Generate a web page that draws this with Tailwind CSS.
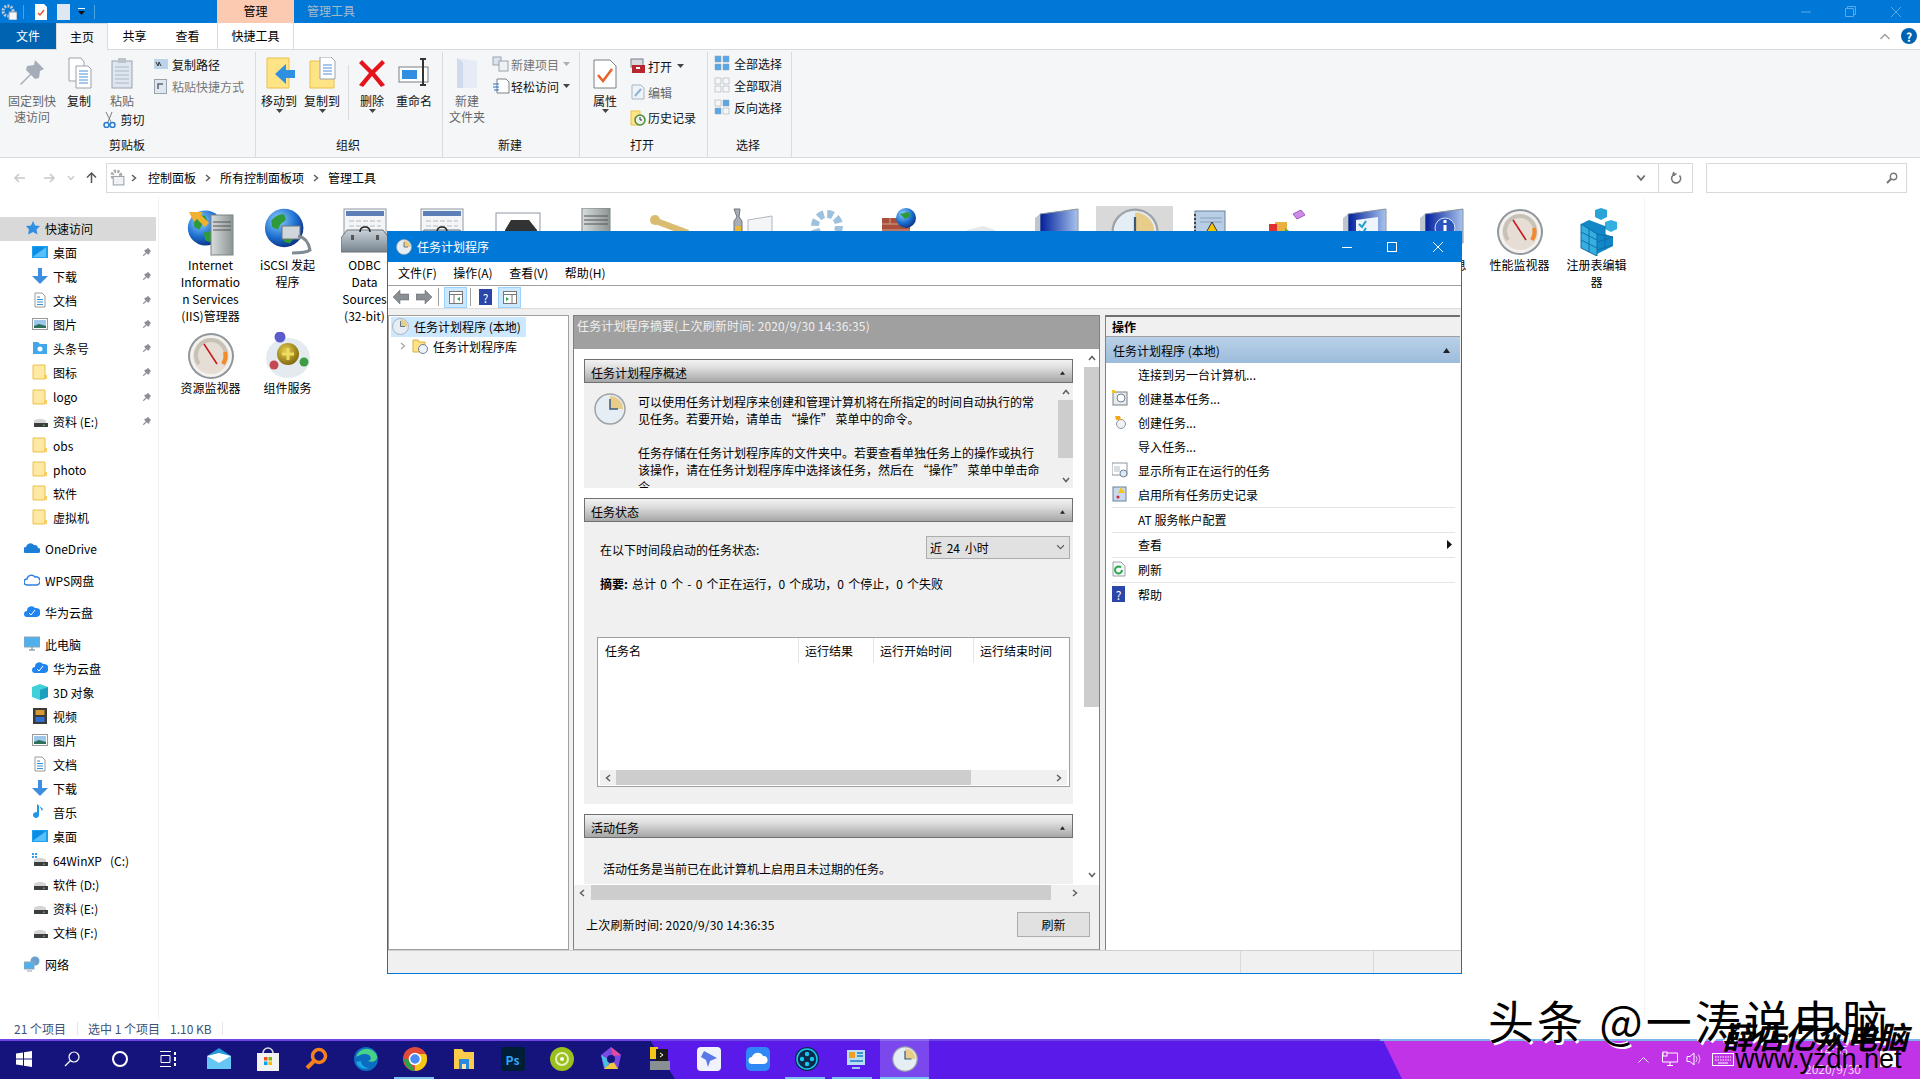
<!DOCTYPE html>
<html lang="zh-CN">
<head>
    <meta charset="UTF-8">
    <title>任务计划程序</title>
    <script src="https://cdn.jsdelivr.net/npm/@tailwindcss/browser@4"></script>
</head>
<body class="relative w-[1920px] h-[1080px] overflow-hidden flex flex-col bg-white text-black text-[12px] leading-[17px] font-['Noto_Sans_CJK_SC','Noto_Sans',sans-serif]">

    <!-- shared icons -->
    <svg class="absolute w-0 h-0">
        <defs>
            <radialGradient id="gGlobe" cx="35%" cy="30%" r="75%"><stop offset="0" stop-color="#8fd0ff"/><stop offset=".6" stop-color="#1d6fd0"/><stop offset="1" stop-color="#0b2f80"/></radialGradient>
            <linearGradient id="gServer" x1="0" x2="1"><stop offset="0" stop-color="#d8dcdc"/><stop offset="1" stop-color="#8c9494"/></linearGradient>
            <linearGradient id="gBox" x1="0" y1="0" x2="0" y2="1"><stop offset="0" stop-color="#cbd3da"/><stop offset="1" stop-color="#76838d"/></linearGradient>
            <radialGradient id="gGold" cx="40%" cy="35%" r="70%"><stop offset="0" stop-color="#e8cf50"/><stop offset="1" stop-color="#7c6408"/></radialGradient>
            <linearGradient id="gMon" x1="0" x2="1"><stop offset="0" stop-color="#001e9c"/><stop offset="1" stop-color="#a9c4ec"/></linearGradient>
        </defs>
        <symbol id="folder" viewBox="0 0 16 16"><path d="M1 1h12v14H1z" fill="#ffe9a3" stroke="#ecc04a"/><path d="M12 11h3v4h-3z" fill="#f5cf62"/></symbol>
        <symbol id="pin" viewBox="0 0 12 12"><path d="M7 1l4 4-1.500 1-1 3-1.500 0-1.500-1.500L2 11 1 10l3.500-3.500L3 5l0-1.500 3-1z" fill="#8b8f94"/></symbol>
        <symbol id="drive" viewBox="0 0 16 16"><path d="M2 7.500Q8 4 14 7.500V11H2z" fill="#d5d5d5"/><path d="M2 10h14v4H2z" fill="#3d3d3d"/><rect x="11" y="11.500" width="1.500" height="1.500" fill="#49c24a"/></symbol>
        <symbol id="desktop" viewBox="0 0 16 16"><rect width="16" height="12" y="2" fill="#1ba1f0"/><path d="M1 13L14 3v10z" fill="#58c0f8"/><path d="M1 3h13L1 12z" fill="#0c8ce4"/></symbol>
        <symbol id="down" viewBox="0 0 16 16"><path d="M6 0h4v8h6l-8 8-8-8h6z" fill="#3c8fdf"/></symbol>
        <symbol id="doc" viewBox="0 0 16 16"><path d="M3 1h7l3 3v11H3z" fill="#fff" stroke="#9a9a9a"/><path d="M5 5h3M5 7.500h6M5 10h6M5 12.500h6" stroke="#2f90e0"/></symbol>
        <symbol id="pic" viewBox="0 0 16 16"><rect y="2.500" x=".5" width="15" height="11" fill="#fff" stroke="#9a9a9a"/><rect x="2" y="4" width="12" height="8" fill="#9dc8ec"/><path d="M2 10l5-2 7 2v2H2z" fill="#2f6e58"/></symbol>
        <symbol id="clock" viewBox="0 0 32 32"><circle cx="16" cy="16" r="15" fill="#e6eef5" stroke="#9ea3a8" stroke-width="1.500"/><path d="M16 3A13 13 0 0 1 29 16H16z" fill="#e8cc8a"/><path d="M16 6v10h8" fill="none" stroke="#3a5c7c" stroke-width="1.500"/></symbol>
        <symbol id="globe" viewBox="0 0 48 48"><circle cx="22" cy="24" r="21" fill="url(#gGlobe)"/><path d="M8 16q6-8 14-7l2 6-6 5-3 6-6-3zM20 30l10-3 6 4-8 10-6-2z" fill="#2f9a3a"/></symbol>
        <symbol id="odbc" viewBox="0 0 48 48"><rect x="3" y="1" width="42" height="34" fill="#f3f5f7" stroke="#8b97a3"/><rect x="5" y="3" width="38" height="5" fill="#5c7fb8"/><path d="M8 13h32M8 18h32M8 23h32" stroke="#b3bcc4" stroke-dasharray="5 2"/><path d="M0 30l6-8h36l6 8v14H0z" fill="url(#gBox)" stroke="#6a757e"/><path d="M19 24q0-5 5-5t5 5" fill="none" stroke="#222" stroke-width="1.500"/><rect x="10" y="27" width="3" height="5" fill="#555"/><rect x="35" y="27" width="3" height="5" fill="#555"/></symbol>
        <symbol id="gauge" viewBox="0 0 48 48"><circle cx="24" cy="24" r="23" fill="#90979c"/><circle cx="24" cy="24" r="21" fill="#f4f2ee"/><circle cx="24" cy="24" r="18" fill="#e6ded4"/><path d="M12 32a15 15 0 1 1 24 0" fill="none" stroke="#c8c1b8" stroke-width="4"/><path d="M38 20a15 15 0 0 1-2 12" fill="none" stroke="#f08a2c" stroke-width="4"/><path d="M17 12l13 20" stroke="#c8141c" stroke-width="1.500"/></symbol>
        <symbol id="monitor" viewBox="0 0 48 48"><path d="M6 6l38-5v34l-38 5z" fill="url(#gMon)" stroke="#8a949e"/><path d="M1 10l5-4v34l-5-3z" fill="#bfc6cc"/></symbol>
        <symbol id="dropdown" viewBox="0 0 7 4"><path d="M0 0h7L3.500 4z" fill="#444"/></symbol>
        <symbol id="quad" viewBox="0 0 16 16"><path d="M1 1h6v6H1zM9 1h6v6H9zM1 9h6v6H1zM9 9h6v6H9z" fill="currentColor" stroke="#9aa3aa" stroke-width=".5"/></symbol>
        <symbol id="chev-l" viewBox="0 0 8 8"><path d="M6 1L2.500 4 6 7" fill="none" stroke="#606060" stroke-width="1.500"/></symbol>
        <symbol id="chev-r" viewBox="0 0 8 8"><path d="M2 1l3.500 3L2 7" fill="none" stroke="#606060" stroke-width="1.500"/></symbol>
        <symbol id="chev-u" viewBox="0 0 8 8"><path d="M1 6l3-3.500L7 6" fill="none" stroke="#606060" stroke-width="1.500"/></symbol>
        <symbol id="chev-d" viewBox="0 0 8 8"><path d="M1 2l3 3.500L7 2" fill="none" stroke="#606060" stroke-width="1.500"/></symbol>
        <symbol id="tri" viewBox="0 0 7 5"><path d="M3.500 0L7 5H0z" fill="#222"/></symbol>
    </svg>

    <!-- Explorer title bar -->
    <header class="h-[23px] bg-[#0078d7] flex shrink-0">
        <div class="w-[217px] flex items-center pl-[1px]">
            <svg class="w-[16px] h-[16px]" viewBox="0 0 16 16"><circle cx="7" cy="7" r="5" fill="none" stroke="#c0c8d0" stroke-width="3" stroke-dasharray="2 1.200"/><rect x="8" y="8" width="8" height="8" fill="#f4f6f8" stroke="#8aa0b8"/></svg>
            <span class="w-[1px] h-[14px] bg-[#4ca3e6] ml-[6px]"></span>
            <svg class="w-[12px] h-[16px] ml-[11px]" viewBox="0 0 12 16"><path d="M0 0h9l3 3v13H0z" fill="#fff"/><path d="M3 9l2 2 4-5" fill="none" stroke="#e0562a" stroke-width="1.500"/></svg>
            <span class="w-[13px] h-[16px] bg-[#dfe7f2] ml-[10px]"></span>
            <svg class="w-[7px] h-[8px] ml-[8px]" viewBox="0 0 7 8"><path d="M0 0h7v1H0z" fill="#fff"/><path d="M0 3h7L3.500 7z" fill="#111"/></svg>
            <span class="w-[1px] h-[14px] bg-[#4ca3e6] ml-[9px]"></span>
        </div>
        <div class="w-[77px] h-full bg-[#fccab1] flex items-center justify-center pb-[3px]">管理</div>
        <div class="ml-[13px] flex items-center text-[#a4b8cc] pb-[3px]">管理工具</div>
        <div class="ml-auto flex items-center gap-[31px] pr-[17px]">
            <svg class="w-[14px] h-[14px]" viewBox="0 0 14 14"><path d="M2 7h10" stroke="#5ca9e6"/></svg>
            <svg class="w-[14px] h-[14px]" viewBox="0 0 14 14"><path d="M3.500 3.500V1.500h8v8h-2M1.500 3.500h8v8h-8z" fill="none" stroke="#5ca9e6"/></svg>
            <svg class="w-[14px] h-[14px]" viewBox="0 0 14 14"><path d="M2 2l10 10M12 2L2 12" stroke="#5ca9e6"/></svg>
        </div>
    </header>

    <!-- Ribbon tabs -->
    <nav class="h-[26px] flex items-center shrink-0">
        <div class="w-[56px] h-[26px] bg-[#0063b1] text-white flex items-center justify-center pb-[2px]">文件</div>
        <div class="w-[52px] h-[27px] border-x border-t border-[#dadbdc] bg-[#f5f6f7] self-start flex items-center justify-center pb-[2px] relative z-10">主页</div>
        <div class="w-[53px] h-[26px] flex items-center justify-center pb-[2px]">共享</div>
        <div class="w-[53px] h-[26px] flex items-center justify-center pb-[2px]">查看</div>
        <div class="ml-[3px] w-[77px] h-[26px] border-x border-[#dadbdc] flex items-center justify-center pb-[2px]">快捷工具</div>
        <svg class="w-[12px] h-[12px] ml-auto" viewBox="0 0 8 8"><path d="M1 6l3-3 3 3" fill="none" stroke="#a0a0a0"/></svg>
        <span class="w-[16px] h-[16px] rounded-full bg-[#0063b1] text-white font-bold flex items-center justify-center ml-[10px] mr-[3px]">?</span>
    </nav>

    <!-- Ribbon -->
    <section class="h-[109px] bg-[#f5f6f7] border-y border-[#dadbdc] flex shrink-0 text-[#111]">
        <!-- clipboard -->
        <div class="w-[256px] h-[105px] mt-[2px] border-r border-[#dadbdc] flex flex-col">
            <div class="h-[83px] pt-[1px] flex">
                <div class="ml-[6px] w-[52px] mt-[4px] flex flex-col items-center text-center text-[#666]">
                    <svg class="w-[32px] h-[32px]" viewBox="0 0 32 32"><path d="M19 3l9 9-4 2-1 7-4 1-4-4-10 10-1-1 10-10-4-4 1-4 7-1z" fill="#a4adb8"/></svg>
                    <span class="mt-[4px] leading-[16px]">固定到快<br>速访问</span>
                </div>
                <div class="ml-[6px] w-[30px] mt-[4px] flex flex-col items-center">
                    <svg class="w-[32px] h-[32px]" viewBox="0 0 32 32"><path d="M6 1h12l3 4v19H6z" fill="#fff" stroke="#9aa3aa"/><path d="M13 9h12l3 3v19H13z" fill="#fff" stroke="#9aa3aa"/><path d="M16 14h9M16 17h9M16 20h9M16 23h9M16 26h9" stroke="#4a90d9"/></svg>
                    <span class="mt-[4px] leading-[16px]">复制</span>
                </div>
                <div class="ml-[6px] w-[44px] mt-[4px] flex flex-col items-center">
                    <svg class="w-[32px] h-[32px]" viewBox="0 0 32 32"><rect x="6" y="4" width="20" height="27" fill="#dfe6f0" stroke="#9aa3aa"/><rect x="12" y="1" width="8" height="5" fill="#bcc3ca"/><path d="M9 10h14M9 14h14M9 18h14M9 22h14M9 26h14" stroke="#a9b9cc"/></svg>
                    <span class="mt-[4px] leading-[16px] text-[#666]">粘贴</span>
                    <div class="flex items-center whitespace-nowrap mt-[2px] ml-[3px]">
                        <svg class="w-[14px] h-[16px] mr-[4px]" viewBox="0 0 14 16"><path d="M3 0l5 10M9 0L5 10" stroke="#7a7f86"/><circle cx="3.500" cy="13" r="2.500" fill="none" stroke="#2b7bd0" stroke-width="1.500"/><circle cx="9.500" cy="13" r="2.500" fill="none" stroke="#2b7bd0" stroke-width="1.500"/></svg>
                        <span>剪切</span>
                    </div>
                </div>
                <div class="ml-[10px] flex flex-col">
                    <div class="h-[22px] flex items-center">
                        <svg class="w-[14px] h-[10px] mr-[4px]" viewBox="0 0 14 10"><rect width="14" height="10" fill="#bcd4ea"/><path d="M2 3l2 4 1-4 2 4" fill="none" stroke="#333"/></svg>
                        <span>复制路径</span>
                    </div>
                    <div class="h-[22px] flex items-center text-[#777]">
                        <svg class="w-[13px] h-[16px] mr-[5px]" viewBox="0 0 13 16"><rect x=".5" y="1.500" width="12" height="14" fill="#dfe6f0" stroke="#9aa3aa"/><path d="M4 11V6h5" fill="none" stroke="#5c6670" stroke-width="1.500"/></svg>
                        <span>粘贴快捷方式</span>
                    </div>
                </div>
            </div>
            <div class="h-[20px] pl-[109px] pb-[1px] flex items-center">剪贴板</div>
        </div>
        <!-- organize -->
        <div class="w-[187px] h-[105px] mt-[2px] border-r border-[#dadbdc] flex flex-col">
            <div class="h-[83px] pt-[1px] flex">
                <div class="ml-[5px] w-[36px] mt-[4px] flex flex-col items-center">
                    <svg class="w-[32px] h-[32px]" viewBox="0 0 32 32"><path d="M4 1h22v30H4z" fill="#ffe486" stroke="#ecc04a"/><path d="M32 13v8h-9v6l-11-10 11-10v6z" fill="#2f8fe0"/></svg>
                    <span class="mt-[4px] leading-[16px]">移动到</span>
                    <svg class="w-[7px] h-[4px]"><use href="#dropdown"/></svg>
                </div>
                <div class="ml-[7px] w-[36px] mt-[4px] flex flex-col items-center">
                    <svg class="w-[32px] h-[32px]" viewBox="0 0 32 32"><path d="M4 4h24v27H4z" fill="#ffe486" stroke="#ecc04a"/><path d="M14 0h11l4 4v18H14z" fill="#fff" stroke="#9aa3aa"/><path d="M17 8h9M17 11h9M17 14h9M17 17h9" stroke="#4a90d9"/></svg>
                    <span class="mt-[4px] leading-[16px]">复制到</span>
                    <svg class="w-[7px] h-[4px]"><use href="#dropdown"/></svg>
                </div>
                <span class="ml-[8px] w-[1px] h-[55px] mt-[12px] bg-[#dadbdc]"></span>
                <div class="ml-[10px] w-[26px] mt-[4px] flex flex-col items-center">
                    <svg class="w-[32px] h-[32px]" viewBox="0 0 32 32"><path d="M6 3l10 10L26 3l3 3-10 10 10 12-4 2-9-11-9 11-4-2 10-12L3 6z" fill="#e5141c"/></svg>
                    <span class="mt-[4px] leading-[16px]">删除</span>
                    <svg class="w-[7px] h-[4px]"><use href="#dropdown"/></svg>
                </div>
                <div class="ml-[10px] w-[38px] mt-[4px] flex flex-col items-center">
                    <svg class="w-[32px] h-[32px]" viewBox="0 0 32 32"><rect x="1" y="10" width="29" height="15" fill="#fff" stroke="#7a7f86"/><rect x="4" y="13" width="15" height="9" fill="#2f8fe0"/><path d="M22 2h6M25 2v26M22 28h6" fill="none" stroke="#333" stroke-width="2"/></svg>
                    <span class="mt-[4px] leading-[16px]">重命名</span>
                </div>
            </div>
            <div class="h-[20px] pl-[80px] pb-[1px] flex items-center">组织</div>
        </div>
        <!-- new -->
        <div class="w-[137px] h-[105px] mt-[2px] border-r border-[#dadbdc] flex flex-col">
            <div class="h-[83px] pt-[1px] flex">
                <div class="ml-[5px] w-[38px] mt-[4px] flex flex-col items-center text-[#666]">
                    <svg class="w-[32px] h-[32px]" viewBox="0 0 32 32"><path d="M6 1l20 3v27H6z" fill="#e6ecf5"/><path d="M6 1l6 4v26H6z" fill="#cfdbec"/></svg>
                    <span class="mt-[4px] leading-[16px] text-center">新建<br>文件夹</span>
                </div>
                <div class="ml-[6px] flex flex-col">
                    <div class="h-[22px] flex items-center text-[#777]">
                        <svg class="w-[18px] h-[16px] mr-[1px]" viewBox="0 0 18 16"><rect x="1" y="1" width="8" height="8" fill="#dbe4ee" stroke="#9aa3aa"/><rect x="7" y="5" width="9" height="10" fill="#eef2f6" stroke="#9aa3aa"/></svg>
                        <span>新建项目</span>
                        <svg class="w-[7px] h-[4px] ml-[4px] opacity-40"><use href="#dropdown"/></svg>
                    </div>
                    <div class="h-[22px] flex items-center">
                        <svg class="w-[18px] h-[16px] mr-[1px]" viewBox="0 0 18 16"><path d="M5 1h9l3 3v11H5z" fill="#fff" stroke="#7a7f86"/><path d="M1 6h6M1 9h6M2 12h5" stroke="#2b6fc0"/></svg>
                        <span>轻松访问</span>
                        <svg class="w-[7px] h-[4px] ml-[4px]"><use href="#dropdown"/></svg>
                    </div>
                </div>
            </div>
            <div class="h-[20px] pl-[55px] pb-[1px] flex items-center">新建</div>
        </div>
        <!-- open -->
        <div class="w-[128px] h-[105px] mt-[2px] border-r border-[#dadbdc] flex flex-col">
            <div class="h-[83px] pt-[1px] flex">
                <div class="ml-[12px] w-[26px] mt-[4px] flex flex-col items-center">
                    <svg class="w-[32px] h-[32px]" viewBox="0 0 32 32"><path d="M5 3h16l6 6v22H5z" fill="#fff" stroke="#7a7f86"/><path d="M9 18l5 6 9-12" fill="none" stroke="#e8622a" stroke-width="2.500"/></svg>
                    <span class="mt-[4px] leading-[16px]">属性</span>
                    <svg class="w-[7px] h-[4px]"><use href="#dropdown"/></svg>
                </div>
                <div class="ml-[12px] flex flex-col">
                    <div class="h-[26px] flex items-center">
                        <svg class="w-[16px] h-[16px] mr-[2px]" viewBox="0 0 16 16"><rect x="1" y="1" width="12" height="8" fill="#d6dadf" stroke="#7a7f86"/><rect x="2" y="7" width="13" height="8" fill="#b8262e"/><rect x="6" y="9" width="4" height="2" fill="#fff"/></svg>
                        <span>打开</span>
                        <svg class="w-[7px] h-[4px] ml-[5px]"><use href="#dropdown"/></svg>
                    </div>
                    <div class="h-[26px] flex items-center text-[#666]">
                        <svg class="w-[16px] h-[16px] mr-[2px]" viewBox="0 0 16 16"><path d="M2 1h9l3 3v11H2z" fill="#eef3f8" stroke="#a9b7c6"/><path d="M5 12l6-7" stroke="#8fb1d2" stroke-width="2"/></svg>
                        <span>编辑</span>
                    </div>
                    <div class="h-[25px] flex items-center">
                        <svg class="w-[16px] h-[16px] mr-[2px]" viewBox="0 0 16 16"><path d="M1 1h9v14H1z" fill="#ffe486" stroke="#ecc04a"/><circle cx="10" cy="10" r="5" fill="#e8f2e8" stroke="#4d8b3a" stroke-width="1.500"/><path d="M10 7v3h2" fill="none" stroke="#333"/></svg>
                        <span>历史记录</span>
                    </div>
                </div>
            </div>
            <div class="h-[20px] pl-[50px] pb-[1px] flex items-center">打开</div>
        </div>
        <!-- select -->
        <div class="w-[84px] h-[105px] mt-[2px] border-r border-[#dadbdc] flex flex-col">
            <div class="h-[83px] pl-[6px] flex flex-col">
                <div class="h-[22px] flex items-center">
                    <svg class="w-[16px] h-[16px] mr-[4px] text-[#56a8ea]"><use href="#quad"/></svg>
                    <span>全部选择</span>
                </div>
                <div class="h-[22px] flex items-center">
                    <svg class="w-[16px] h-[16px] mr-[4px] text-[#f5f6f7]"><use href="#quad"/></svg>
                    <span>全部取消</span>
                </div>
                <div class="h-[22px] flex items-center">
                    <svg class="w-[16px] h-[16px] mr-[4px]" viewBox="0 0 16 16"><path d="M1 1h6v6H1zM9 9h6v6H9z" fill="#f5f6f7" stroke="#9aa3aa" stroke-width=".5"/><path d="M9 1h6v6H9zM1 9h6v6H1z" fill="#56a8ea" stroke="#9aa3aa" stroke-width=".5"/></svg>
                    <span>反向选择</span>
                </div>
            </div>
            <div class="h-[20px] pl-[28px] pb-[1px] flex items-center">选择</div>
        </div>
    </section>

    <!-- Address bar -->
    <div class="h-[39px] flex items-center shrink-0">
        <div class="w-[106px] flex items-center pl-[13px]">
            <svg class="w-[13px] h-[12px]" viewBox="0 0 13 12"><path d="M12 6H2M6 2L2 6l4 4" fill="none" stroke="#c8c8c8" stroke-width="1.500"/></svg>
            <svg class="w-[13px] h-[12px] ml-[17px]" viewBox="0 0 13 12"><path d="M1 6h10M7 2l4 4-4 4" fill="none" stroke="#c8c8c8" stroke-width="1.500"/></svg>
            <svg class="w-[8px] h-[8px] ml-[11px]" viewBox="0 0 8 8"><path d="M1 2l3 3.500L7 2" fill="none" stroke="#c8c8c8" stroke-width="1.200"/></svg>
            <svg class="w-[13px] h-[13px] ml-[10px]" viewBox="0 0 13 13"><path d="M6.500 12V2M2 6.500L6.500 2 11 6.500" fill="none" stroke="#555" stroke-width="1.500"/></svg>
        </div>
        <div class="w-[1553px] h-[30px] border border-[#d9d9d9] flex items-center pl-[2px]">
            <svg class="w-[17px] h-[17px]" viewBox="0 0 16 16"><circle cx="7" cy="6" r="4" fill="none" stroke="#a8a8a8" stroke-width="3" stroke-dasharray="2 1.200"/><rect x="4" y="7" width="10" height="8" fill="#f0f2f5" stroke="#9aa3aa"/></svg>
            <svg class="w-[8px] h-[8px] ml-[4px] mr-[10px]"><use href="#chev-r"/></svg>
            <span>控制面板</span>
            <svg class="w-[8px] h-[8px] mx-[8px]"><use href="#chev-r"/></svg>
            <span>所有控制面板项</span>
            <svg class="w-[8px] h-[8px] mx-[8px]"><use href="#chev-r"/></svg>
            <span>管理工具</span>
            <svg class="w-[10px] h-[10px] ml-auto mr-[12px]" viewBox="0 0 8 8"><path d="M1 2l3 3.500L7 2" fill="none" stroke="#707070" stroke-width="1.500"/></svg>
        </div>
        <div class="w-[34px] h-[30px] border border-l-0 border-[#d9d9d9] flex items-center justify-center">
            <svg class="w-[12px] h-[13px]" viewBox="0 0 12 13"><path d="M9.500 4.500a4.500 4.500 0 1 1-3-1.500H4M4 1L3 3l2 1.500" fill="none" stroke="#777" stroke-width="1.500"/></svg>
        </div>
        <div class="ml-[13px] w-[201px] h-[30px] border border-[#d9d9d9] flex items-center justify-end pr-[8px]">
            <svg class="w-[12px] h-[12px]" viewBox="0 0 12 12"><circle cx="7.500" cy="4.500" r="3.200" fill="none" stroke="#777" stroke-width="1.400"/><path d="M5 7l-4 4" stroke="#777" stroke-width="2"/></svg>
        </div>
    </div>

    <!-- Explorer body -->
    <main class="h-[822px] flex shrink-0">
        <aside class="w-[159px] border-r border-[#f0f0f0] pt-[20px]">
            <div class="h-[24px] w-[156px] -mb-[1px] pb-[2px] bg-[#d9d9d9] flex items-center pl-[26px]">
                <svg class="w-[14px] h-[14px] mr-[5px]" viewBox="0 0 14 14"><path d="M7 0l2 4.500 5 .5-3.500 3.500 1 5L7 11l-5 2.500 1-5L0 5l5-.5z" fill="#2f8fe0"/></svg>快速访问
            </div>
            <!-- pinned -->
            <div class="h-[24px] flex items-center pl-[32px]"><svg class="w-[16px] h-[16px] mr-[5px]"><use href="#desktop"/></svg>桌面<svg class="w-[10px] h-[10px] ml-auto mr-[6px]"><use href="#pin"/></svg></div>
            <div class="h-[24px] flex items-center pl-[32px]"><svg class="w-[16px] h-[16px] mr-[5px]"><use href="#down"/></svg>下载<svg class="w-[10px] h-[10px] ml-auto mr-[6px]"><use href="#pin"/></svg></div>
            <div class="h-[24px] flex items-center pl-[32px]"><svg class="w-[16px] h-[16px] mr-[5px]"><use href="#doc"/></svg>文档<svg class="w-[10px] h-[10px] ml-auto mr-[6px]"><use href="#pin"/></svg></div>
            <div class="h-[24px] flex items-center pl-[32px]"><svg class="w-[16px] h-[16px] mr-[5px]"><use href="#pic"/></svg>图片<svg class="w-[10px] h-[10px] ml-auto mr-[6px]"><use href="#pin"/></svg></div>
            <div class="h-[24px] flex items-center pl-[32px]">
                <svg class="w-[16px] h-[16px] mr-[5px]" viewBox="0 0 16 16"><path d="M1 2h5l2 2h7v10H1z" fill="#3fa7ea"/><circle cx="8" cy="9" r="2.500" fill="#fff"/></svg>头条号<svg class="w-[10px] h-[10px] ml-auto mr-[6px]"><use href="#pin"/></svg>
            </div>
            <div class="h-[24px] flex items-center pl-[32px]"><svg class="w-[16px] h-[16px] mr-[5px]"><use href="#folder"/></svg>图标<svg class="w-[10px] h-[10px] ml-auto mr-[6px]"><use href="#pin"/></svg></div>
            <div class="h-[25px] flex items-center pl-[32px]"><svg class="w-[16px] h-[16px] mr-[5px]"><use href="#folder"/></svg>logo<svg class="w-[10px] h-[10px] ml-auto mr-[6px]"><use href="#pin"/></svg></div>
            <div class="h-[24px] flex items-center pl-[32px]"><svg class="w-[16px] h-[16px] mr-[5px]"><use href="#drive"/></svg>资料 (E:)<svg class="w-[10px] h-[10px] ml-auto mr-[6px]"><use href="#pin"/></svg></div>
            <div class="h-[24px] flex items-center pl-[32px]"><svg class="w-[16px] h-[16px] mr-[5px]"><use href="#folder"/></svg>obs</div>
            <div class="h-[24px] flex items-center pl-[32px]"><svg class="w-[16px] h-[16px] mr-[5px]"><use href="#folder"/></svg>photo</div>
            <div class="h-[24px] flex items-center pl-[32px]"><svg class="w-[16px] h-[16px] mr-[5px]"><use href="#folder"/></svg>软件</div>
            <div class="h-[24px] flex items-center pl-[32px]"><svg class="w-[16px] h-[16px] mr-[5px]"><use href="#folder"/></svg>虚拟机</div>
            <!-- clouds -->
            <div class="h-[24px] mt-[7px] flex items-center pl-[24px]">
                <svg class="w-[16px] h-[16px] mr-[5px]" viewBox="0 0 16 16"><path d="M2 13a3 3 0 0 1 0-6 4.500 4.500 0 0 1 8-2 3.500 3.500 0 0 1 4 3 2.500 2.500 0 0 1 0 5z" fill="#1b7fd8"/></svg>OneDrive
            </div>
            <div class="h-[24px] mt-[8px] flex items-center pl-[24px]">
                <svg class="w-[16px] h-[16px] mr-[5px]" viewBox="0 0 16 16"><path d="M3 13a3 3 0 0 1 0-6 4.500 4.500 0 0 1 8-2 3.500 3.500 0 0 1 2 8z" fill="none" stroke="#2f7fe0" stroke-width="1.500"/></svg>WPS网盘
            </div>
            <div class="h-[24px] mt-[8px] flex items-center pl-[24px]">
                <svg class="w-[16px] h-[16px] mr-[5px]" viewBox="0 0 16 16"><path d="M3 13a3 3 0 0 1 0-6 4.500 4.500 0 0 1 8-3 3.500 3.500 0 0 1 2 9z" fill="#1f86f0"/><path d="M5 9l2 2 4-5" fill="none" stroke="#fff"/></svg>华为云盘
            </div>
            <div class="h-[24px] mt-[8px] flex items-center pl-[24px]">
                <svg class="w-[16px] h-[16px] mr-[5px]" viewBox="0 0 16 16"><rect y="1" width="16" height="10" fill="#4fb0ec" stroke="#8fa6b8"/><path d="M5 14h6M8 11v3" stroke="#8fa6b8" stroke-width="1.500"/></svg>此电脑
            </div>
            <!-- this pc -->
            <div class="h-[24px] flex items-center pl-[32px]">
                <svg class="w-[16px] h-[16px] mr-[5px]" viewBox="0 0 16 16"><path d="M3 13a3 3 0 0 1 0-6 4.500 4.500 0 0 1 8-3 3.500 3.500 0 0 1 2 9z" fill="#1f86f0"/><path d="M5 9l2 2 4-5" fill="none" stroke="#fff"/></svg>华为云盘
            </div>
            <div class="h-[24px] flex items-center pl-[32px]">
                <svg class="w-[16px] h-[16px] mr-[5px]" viewBox="0 0 16 16"><path d="M8 0l8 3v10l-8 3-8-3V3z" fill="#40d0d8"/><path d="M8 6l8-3v10l-8 3z" fill="#1a9fc0"/></svg>3D 对象
            </div>
            <div class="h-[24px] flex items-center pl-[32px]">
                <svg class="w-[16px] h-[16px] mr-[5px]" viewBox="0 0 16 16"><rect x="1" y="0" width="14" height="16" fill="#3a3a3a"/><rect x="3.500" y="2" width="9" height="5" fill="#d89a30"/><rect x="3.500" y="9" width="9" height="5" fill="#2f6fd0"/></svg>视频
            </div>
            <div class="h-[24px] flex items-center pl-[32px]"><svg class="w-[16px] h-[16px] mr-[5px]"><use href="#pic"/></svg>图片</div>
            <div class="h-[24px] flex items-center pl-[32px]"><svg class="w-[16px] h-[16px] mr-[5px]"><use href="#doc"/></svg>文档</div>
            <div class="h-[24px] flex items-center pl-[32px]"><svg class="w-[16px] h-[16px] mr-[5px]"><use href="#down"/></svg>下载</div>
            <div class="h-[24px] flex items-center pl-[32px]">
                <svg class="w-[16px] h-[16px] mr-[5px]" viewBox="0 0 16 16"><path d="M7 1v10a3 3 0 1 1-2-2.800V0l6 5-1 2z" fill="#1f96e8"/></svg>音乐
            </div>
            <div class="h-[24px] flex items-center pl-[32px]"><svg class="w-[16px] h-[16px] mr-[5px]"><use href="#desktop"/></svg>桌面</div>
            <div class="h-[24px] flex items-center pl-[32px]">
                <svg class="w-[16px] h-[16px] mr-[5px]" viewBox="0 0 16 16"><use href="#drive"/><path d="M0 1h2v2H0zM3 1h2v2H3zM0 4h2v2H0zM3 4h2v2H3z" fill="#2fa0f0"/></svg>64WinXP&nbsp;&nbsp;&nbsp;(C:)
            </div>
            <div class="h-[24px] flex items-center pl-[32px]"><svg class="w-[16px] h-[16px] mr-[5px]"><use href="#drive"/></svg>软件 (D:)</div>
            <div class="h-[24px] flex items-center pl-[32px]"><svg class="w-[16px] h-[16px] mr-[5px]"><use href="#drive"/></svg>资料 (E:)</div>
            <div class="h-[24px] flex items-center pl-[32px]"><svg class="w-[16px] h-[16px] mr-[5px]"><use href="#drive"/></svg>文档 (F:)</div>
            <div class="h-[24px] mt-[8px] flex items-center pl-[24px]">
                <svg class="w-[16px] h-[16px] mr-[5px]" viewBox="0 0 16 16"><circle cx="11" cy="5" r="4.500" fill="#6a9fd0"/><rect y="6" width="10" height="7" fill="#4fb0ec" stroke="#8fa6b8"/><path d="M3 15h5" stroke="#8fa6b8"/></svg>网络
            </div>
        </aside>

        <!-- icon view -->
        <div class="w-[1486px] border-r border-[#f5f5f5] pl-[13px] pt-[10px] grid grid-cols-[repeat(19,77px)] grid-rows-[124px_auto] justify-start content-start">
            <div class="flex flex-col items-center pt-[1px] text-center">
                <svg class="w-[48px] h-[48px]" viewBox="0 0 48 48"><use href="#globe" width="40" height="40" y="0"/><rect x="24" y="7" width="22" height="40" fill="url(#gServer)" stroke="#7a8488"/><path d="M26 14h18M26 18h18M26 22h18" stroke="#555"/><path d="M2 4h14l-2 3 8 8-4 4-8-8-3 3z" fill="#f0b030"/></svg>
                <span>Internet<br>Informatio<br>n Services<br>(IIS)管理器</span>
            </div>
            <div class="flex flex-col items-center pt-[1px] text-center">
                <svg class="w-[48px] h-[48px]" viewBox="0 0 48 48"><use href="#globe" width="44" height="44" y="-2"/><rect x="18" y="18" width="18" height="13" fill="#cfd6dc" stroke="#6a757e"/><path d="M34 28q10 2 12 14-4 3-18 3" fill="none" stroke="#7f8a92" stroke-width="3"/></svg>
                <span>iSCSI 发起<br>程序</span>
            </div>
            <div class="flex flex-col items-center pt-[1px] text-center">
                <svg class="w-[48px] h-[48px]"><use href="#odbc"/></svg>
                <span>ODBC<br>Data<br>Sources<br>(32-bit)</span>
            </div>
            <div class="flex flex-col items-center pt-[1px]"><svg class="w-[48px] h-[48px]"><use href="#odbc"/></svg></div>
            <div class="flex flex-col items-center pt-[1px]">
                <svg class="w-[48px] h-[48px]" viewBox="0 0 48 48"><rect x="1" y="5" width="44" height="38" fill="#fff" stroke="#8b97a3"/><path d="M10 22l6-10h18l8 10v14H10z" fill="#333"/></svg>
            </div>
            <div class="flex flex-col items-center pt-[1px]">
                <svg class="w-[48px] h-[48px]" viewBox="0 0 48 48"><rect x="10" y="0" width="28" height="48" fill="url(#gServer)" stroke="#7a8488"/><path d="M12 8h24M12 12h24M12 16h24" stroke="#555"/></svg>
            </div>
            <div class="flex flex-col items-center pt-[1px]">
                <svg class="w-[48px] h-[48px]" viewBox="0 0 48 48"><circle cx="6" cy="12" r="5" fill="#d9bc70"/><path d="M8 10l32 12-2 6L6 16z" fill="#d9bc70"/><path d="M22 30h24v18H22z" fill="#b9a070"/></svg>
            </div>
            <div class="flex flex-col items-center pt-[1px]">
                <svg class="w-[48px] h-[48px]" viewBox="0 0 48 48"><path d="M8 1l6 0-1 8 3 4v24h-8V13l3-4z" fill="#a8aeb4" stroke="#6f767c"/><rect x="9" y="18" width="6" height="8" fill="#e8b93a"/><path d="M22 12l24-4 0 26-24 4z" fill="#f3f5f7" stroke="#b0b6bc"/></svg>
            </div>
            <div class="flex flex-col items-center pt-[1px]">
                <svg class="w-[48px] h-[48px]" viewBox="0 0 48 48"><circle cx="24" cy="18" r="12" fill="none" stroke="#9ec2de" stroke-width="8" stroke-dasharray="6 3.400"/><circle cx="24" cy="18" r="7" fill="#fff"/></svg>
            </div>
            <div class="flex flex-col items-center pt-[1px]">
                <svg class="w-[48px] h-[48px]" viewBox="0 0 48 48"><path d="M2 10h28v20H2z" fill="#a8503c"/><path d="M2 16h28M2 22h28M10 10v6M20 10v6" stroke="#d8a08c"/><circle cx="26" cy="10" r="10" fill="url(#gGlobe)"/><path d="M20 6l8-2 3 4-6 3z" fill="#2f9a3a"/></svg>
            </div>
            <div class="flex flex-col items-center pt-[1px]">
                <svg class="w-[48px] h-[48px]" viewBox="0 0 48 48"><path d="M10 22l16-4 12 4v10H10z" fill="#e6e8ea"/></svg>
            </div>
            <div class="flex flex-col items-center pt-[1px]"><svg class="w-[48px] h-[48px]"><use href="#monitor"/></svg></div>
            <div class="flex flex-col items-center pt-[1px] h-[124px] -mt-[1px] bg-[#d9d9d9]">
                <svg class="w-[48px] h-[48px] mt-[1px]" viewBox="0 0 32 32"><use href="#clock"/></svg>
            </div>
            <div class="flex flex-col items-center pt-[1px]">
                <svg class="w-[48px] h-[48px]" viewBox="0 0 48 48"><rect x="7" y="3" width="30" height="40" fill="#b8cde6" stroke="#6d7f96"/><path d="M7 6v34" stroke="#444" stroke-width="2" stroke-dasharray="2 2"/><path d="M12 10h22M12 14h22" stroke="#8ba0ba"/><path d="M24 14l9 16H15z" fill="#f5c400" stroke="#333"/></svg>
            </div>
            <div class="flex flex-col items-center pt-[1px]">
                <svg class="w-[48px] h-[48px]" viewBox="0 0 48 48"><path d="M28 6l8-4 4 5-8 4z" fill="#d08ae8" stroke="#9a5cc0"/><rect x="10" y="14" width="12" height="14" fill="#e8b040"/><rect x="4" y="16" width="8" height="14" fill="#e03030"/><path d="M20 20l14 10-14 6z" fill="#48b050"/></svg>
            </div>
            <div class="flex flex-col items-center pt-[1px]">
                <svg class="w-[48px] h-[48px]" viewBox="0 0 48 48"><use href="#monitor"/><path d="M14 12l22-3v22l-22 3z" fill="#eef4fb"/><path d="M17 16l3 3 4-6M17 23l3 3 4-6" fill="none" stroke="#1aa0c8" stroke-width="2"/></svg>
            </div>
            <div class="flex flex-col items-center pt-[1px] text-center">
                <svg class="w-[48px] h-[48px]" viewBox="0 0 48 48"><use href="#monitor"/><circle cx="26" cy="20" r="10" fill="#2c55c0" stroke="#cfe0f5"/><rect x="24.500" y="17" width="3" height="9" fill="#fff"/><rect x="24.500" y="12" width="3" height="3" fill="#fff"/></svg>
                <span>系统信息</span>
            </div>
            <div class="flex flex-col items-center pt-[1px] text-center">
                <svg class="w-[48px] h-[48px]"><use href="#gauge"/></svg>
                <span>性能监视器</span>
            </div>
            <div class="flex flex-col items-center pt-[1px] text-center">
                <svg class="w-[48px] h-[48px]" viewBox="0 0 48 48"><path d="M28 0l6 2v7l-6 3-6-3V2z" fill="#2aa3d8"/><path d="M38 12l6 2v7l-6 3-6-3v-7z" fill="#35afe0"/><path d="M16 12l8 3 8 3v8l8 3v9l-16 8-16-8V16z" fill="#1287c8"/><path d="M8 16v24l16 8V26zM8 24l16 8M8 32l16 8M16 20v24" fill="#35afe0" stroke="#0d6ea8"/><path d="M24 26l16 3M24 34l16-5M24 42l16-5M32 18v24" fill="none" stroke="#0d6ea8"/></svg>
                <span>注册表编辑<br>器</span>
            </div>
            <div class="flex flex-col items-center pt-[1px] text-center">
                <svg class="w-[48px] h-[48px]"><use href="#gauge"/></svg>
                <span class="-mt-[1px]">资源监视器</span>
            </div>
            <div class="flex flex-col items-center pt-[1px] text-center">
                <svg class="w-[48px] h-[48px]" viewBox="0 0 48 48"><ellipse cx="24" cy="26" rx="22" ry="20" fill="#e4ebf0"/><circle cx="24" cy="22" r="11" fill="url(#gGold)"/><path d="M18 22h12M24 16v12" stroke="#f0dc60" stroke-width="3"/><circle cx="16" cy="5" r="5.500" fill="#5a5ccc"/><circle cx="10" cy="33" r="4.500" fill="#c44a50"/><circle cx="40" cy="30" r="4.500" fill="#3f9c44"/></svg>
                <span class="-mt-[1px]">组件服务</span>
            </div>
        </div>
    </main>

    <!-- Explorer status bar -->
    <footer class="h-[20px] flex items-center shrink-0 pb-[2px] text-[#3b5273]">
        <span class="ml-[14px]">21 个项目</span>
        <span class="w-[1px] h-[13px] bg-[#e5e5e5] ml-[11px]"></span>
        <span class="ml-[10px]">选中 1 个项目</span>
        <span class="ml-[10px]">1.10 KB</span>
        <span class="w-[1px] h-[13px] bg-[#e5e5e5] ml-[10px]"></span>
    </footer>

    <!-- Taskbar -->
    <div class="relative h-[40px] bg-[#5a1bea] flex items-center text-white shrink-0">
        <svg class="absolute left-0 top-0 w-[1920px] h-[40px]" viewBox="0 0 1920 40">
            <path d="M0 1h650l25 39H0z" fill="#14147c"/>
            <path d="M1383 1h537v39h-518z" fill="#c133e6"/>
            <path d="M0 0h1920v2H0z" fill="#6f45e6"/>
            <path d="M1380 0h540v2h-540z" fill="#7db4ea"/>
        </svg>
        <div class="relative flex items-center h-full">
            <div class="w-[48px] h-full flex items-center justify-center">
                <svg class="w-[16px] h-[16px]" viewBox="0 0 16 16"><path d="M0 2.500l7-1v6H0zM8 1.300L16 0v7.500H8zM0 8.500h7v6l-7-1zM8 8.500h8V16l-8-1.200z" fill="#fff"/></svg>
            </div>
            <div class="w-[48px] h-full flex items-center justify-center">
                <svg class="w-[16px] h-[16px]" viewBox="0 0 16 16"><circle cx="10" cy="6" r="5" fill="none" stroke="#fff" stroke-width="1.200"/><path d="M6.500 9.500L1 15" stroke="#fff" stroke-width="1.200"/></svg>
            </div>
            <div class="w-[48px] h-full flex items-center justify-center">
                <span class="w-[16px] h-[16px] rounded-full border-2 border-white"></span>
            </div>
            <div class="w-[48px] h-full flex items-center justify-center">
                <svg class="w-[16px] h-[16px]" viewBox="0 0 16 16"><path d="M0 .5h11M0 15.500h11M1 4.500h9v7H1z" fill="none" stroke="#fff"/><path d="M14 1h2v3h-2zM14 6h2v4h-2zM14 12h2v3h-2z" fill="#fff"/></svg>
            </div>
            <div class="ml-[2px] w-[49px] h-full flex items-center justify-center">
                <svg class="w-[24px] h-[24px]" viewBox="0 0 24 24"><path d="M12 1l12 8v13H0V9z" fill="#2399dc"/><path d="M0 9l12 7 12-7v13H0z" fill="#67c7f4"/><path d="M0 9l12 7 12-7-12-3z" fill="#fff"/></svg>
            </div>
            <div class="w-[49px] h-full flex items-center justify-center">
                <svg class="w-[24px] h-[24px]" viewBox="0 0 24 24"><path d="M7 6a5 5 0 0 1 10 0" fill="none" stroke="#ddd" stroke-width="1.500"/><rect x="1" y="6" width="22" height="18" fill="#f2f2f2"/><path d="M8 10h3.500v3.500H8z" fill="#f25022"/><path d="M12.500 10H16v3.500h-3.500z" fill="#7fba00"/><path d="M8 14.500h3.500V18H8z" fill="#00a4ef"/><path d="M12.500 14.500H16V18h-3.500z" fill="#ffb900"/></svg>
            </div>
            <div class="w-[49px] h-full flex items-center justify-center">
                <svg class="w-[24px] h-[24px]" viewBox="0 0 24 24"><circle cx="14" cy="9" r="6.500" fill="none" stroke="#f58020" stroke-width="3.500"/><path d="M9 14l-7 7" stroke="#f58020" stroke-width="4"/></svg>
            </div>
            <div class="w-[49px] h-full flex items-center justify-center">
                <svg class="w-[24px] h-[24px]" viewBox="0 0 24 24"><circle cx="12" cy="12" r="12" fill="#0c6cc0"/><path d="M2 10a11 11 0 0 1 21-1c1 5-5 7-9 5 5-1 3-7-3-7-4 0-7 2-9 3z" fill="#47d28a"/><path d="M7 14c0 4 4 7 8 7-5 2-11 0-13-6z" fill="#1aa6e8"/></svg>
            </div>
            <div class="relative w-[49px] h-full flex items-center justify-center">
                <svg class="w-[24px] h-[24px]" viewBox="0 0 24 24"><circle cx="12" cy="12" r="12" fill="#e04a3a"/><path d="M12 24L5 12l-4 0A12 12 0 0 0 12 24z" fill="#2fa04a"/><path d="M12 24a12 12 0 0 0 11-17H12z" fill="#f5c518"/><circle cx="12" cy="12" r="5.500" fill="#4a8af4" stroke="#fff" stroke-width="1.500"/></svg>
                <span class="absolute bottom-0 left-[4px] w-[40px] h-[2px] bg-[#7cc0f0]"></span>
            </div>
            <div class="w-[49px] h-full flex items-center justify-center">
                <svg class="w-[24px] h-[24px]" viewBox="0 0 24 24"><path d="M2 2h8l2 3h10v17H2z" fill="#fbcc4c"/><path d="M7 12h10v10H7z" fill="#2a8adf"/><path d="M10 17h4v5h-4z" fill="#fbe5a0"/></svg>
            </div>
            <div class="w-[49px] h-full flex items-center justify-center">
                <span class="w-[24px] h-[24px] rounded-[3px] bg-[#001e36] text-[#31a8ff] font-bold flex items-center justify-center">Ps</span>
            </div>
            <div class="w-[49px] h-full flex items-center justify-center">
                <svg class="w-[24px] h-[24px]" viewBox="0 0 24 24"><circle cx="12" cy="12" r="12" fill="#9abf1f"/><circle cx="12" cy="12" r="6" fill="none" stroke="#e8f2c0" stroke-width="2"/><circle cx="12" cy="12" r="2" fill="#fff"/></svg>
            </div>
            <div class="w-[49px] h-full flex items-center justify-center">
                <svg class="w-[24px] h-[24px]" viewBox="0 0 24 24"><path d="M12 0l10 8-3 14H5L2 8z" fill="#7a4ae0"/><path d="M12 0l10 8-8 1z" fill="#e84a9a"/><path d="M2 8l4 14 6-8z" fill="#4ac0e0"/><path d="M19 22H5l9-8z" fill="#f0c840"/><circle cx="12" cy="12" r="4" fill="#14147c"/></svg>
            </div>
            <div class="w-[49px] h-full flex items-center justify-center">
                <svg class="w-[24px] h-[24px]" viewBox="0 0 24 24"><path d="M2 0h8v12H2z" fill="#f5c518"/><rect x="8" y="2" width="12" height="12" fill="#1a1a1a"/><path d="M12 6l3 2-3 2" fill="none" stroke="#fff"/><rect x="2" y="14" width="20" height="9" fill="#8a8f94"/></svg>
            </div>
            <div class="w-[49px] h-full flex items-center justify-center">
                <svg class="w-[24px] h-[24px]" viewBox="0 0 24 24"><rect width="24" height="24" rx="4" fill="#f0f2fc"/><path d="M7 4l13 7-7 3-2 6-2-7-5-3z" fill="#5a78e8"/></svg>
            </div>
            <div class="w-[49px] h-full flex items-center justify-center">
                <svg class="w-[24px] h-[24px]" viewBox="0 0 24 24"><rect width="24" height="24" rx="5" fill="#2f88f5"/><path d="M6 17a3.500 3.500 0 0 1 0-7 6 6 0 0 1 11-1 4 4 0 0 1 1 8z" fill="#fff"/></svg>
            </div>
            <div class="relative w-[49px] h-full flex items-center justify-center">
                <svg class="w-[24px] h-[24px]" viewBox="0 0 24 24"><circle cx="12" cy="12" r="12" fill="#0a2a4c"/><circle cx="12" cy="12" r="10" fill="none" stroke="#18c8f0" stroke-width="1.500"/><circle cx="12" cy="7" r="2.200" fill="#18c8f0"/><circle cx="7" cy="12" r="2.200" fill="#18c8f0"/><circle cx="17" cy="12" r="2.200" fill="#18c8f0"/><circle cx="12" cy="17" r="2.200" fill="#18c8f0"/></svg>
                <span class="absolute bottom-0 left-[3px] w-[40px] h-[2px] bg-[#7cc0f0]"></span>
            </div>
            <div class="relative w-[49px] h-full flex items-center justify-center">
                <svg class="w-[24px] h-[24px]" viewBox="0 0 24 24"><rect x="3" y="3" width="18" height="15" fill="#b8dff5"/><rect x="5" y="5" width="6" height="6" fill="#f0a020"/><path d="M13 6h6M13 9h6M6 14h13" stroke="#1a7ac8" stroke-width="1.500"/><path d="M8 21h8" stroke="#9fc8e8" stroke-width="2"/></svg>
                <span class="absolute bottom-0 left-[1px] w-[40px] h-[2px] bg-[#7cc0f0]"></span>
            </div>
            <div class="relative w-[49px] h-full bg-white/20 flex items-center justify-center">
                <svg class="w-[26px] h-[26px]" viewBox="0 0 32 32"><use href="#clock"/></svg>
                <span class="absolute bottom-0 left-0 w-[49px] h-[2px] bg-[#7cc0f0]"></span>
            </div>
        </div>
        <div class="relative ml-auto flex items-center h-full">
            <svg class="w-[11px] h-[7px] mr-[13px]" viewBox="0 0 11 7"><path d="M.5 6.500l5-5 5 5" fill="none" stroke="#fff"/></svg>
            <svg class="w-[16px] h-[16px] mr-[8px]" viewBox="0 0 16 16"><path d="M.5 2h15v9H.5zM5 14.500h6M8 11v3.500" fill="none" stroke="#fff"/><rect x="1" y="1" width="4" height="4" fill="#c133e6" stroke="#fff"/></svg>
            <svg class="w-[16px] h-[16px] mr-[10px]" viewBox="0 0 16 16"><path d="M1 5.500h3l4-3.500v12l-4-3.500H1z" fill="none" stroke="#fff"/><path d="M10 5q2 3 0 6M12.500 3.500q3 4.500 0 9" fill="none" stroke="#e8b8f4"/></svg>
            <svg class="w-[22px] h-[13px] mr-[70px]" viewBox="0 0 22 13"><rect x=".5" y=".5" width="21" height="12" fill="none" stroke="#fff"/><path d="M3 4h16M3 7h16" stroke="#fff" stroke-dasharray="1.500 1"/><path d="M6 10h10" stroke="#fff"/></svg>
            <div class="w-[58px] mr-[18px] flex flex-col items-center leading-[18px] text-[#f3dcfa]">
                <span class="h-[19px]">14:35</span>
                <span>2020/9/30</span>
            </div>
            <span class="w-[16px] h-[16px] bg-white mr-[24px]"></span>
        </div>
    </div>

    <!-- Task Scheduler window -->
    <div class="absolute left-[387px] top-[231px] w-[1075px] h-[743px] border border-[#0078d7] bg-[#f0f0f0] flex flex-col">
        <div class="h-[30px] bg-[#0078d7] text-white flex items-center shrink-0 pl-[8px]">
            <svg class="w-[16px] h-[16px] mr-[5px]" viewBox="0 0 32 32"><use href="#clock"/></svg>
            <span class="-mt-[2px]">任务计划程序</span>
            <div class="ml-auto flex items-center">
                <svg class="w-[12px] h-[12px] mr-[33px]" viewBox="0 0 12 12"><path d="M1 6.500h10" stroke="#fff"/></svg>
                <svg class="w-[12px] h-[12px] mr-[34px]" viewBox="0 0 12 12"><rect x="1.500" y="1.500" width="9" height="9" fill="none" stroke="#fff"/></svg>
                <svg class="w-[12px] h-[12px] mr-[17px]" viewBox="0 0 12 12"><path d="M1 1l10 10M11 1L1 11" stroke="#fff"/></svg>
            </div>
        </div>
        <div class="h-[24px] bg-white border-b border-[#a0a0a0] flex items-center shrink-0 pl-[10px] pb-[2px] gap-[16.500px]">
            <span>文件(F)</span><span>操作(A)</span><span>查看(V)</span><span>帮助(H)</span>
        </div>
        <div class="h-[22px] bg-white flex items-center shrink-0 pl-[5px]">
            <svg class="w-[16px] h-[14px]" viewBox="0 0 16 14"><path d="M0 7l7-7v4h9v6H7v4z" fill="#8a8f94" stroke="#5c6066" stroke-width=".5"/></svg>
            <svg class="w-[16px] h-[14px] ml-[7px]" viewBox="0 0 16 14"><path d="M16 7L9 0v4H0v6h9v4z" fill="#8a8f94" stroke="#5c6066" stroke-width=".5"/></svg>
            <span class="w-[1px] h-[18px] bg-[#a0a0a0] ml-[6px]"></span>
            <div class="ml-[5px] w-[23px] h-[21px] bg-[#cce8ff] border border-[#99d1ff] flex items-center justify-center">
                <svg class="w-[14px] h-[13px]" viewBox="0 0 14 13"><rect x=".5" y=".5" width="13" height="12" fill="#fff" stroke="#777"/><path d="M.5 3.500h13M5 3.500v9" stroke="#777"/><path d="M11 6L8 8l3 2z" fill="#2da44e"/></svg>
            </div>
            <span class="w-[1px] h-[18px] bg-[#a0a0a0] ml-[3px]"></span>
            <span class="w-[13px] h-[16px] ml-[8px] bg-[#2a46a8] text-white flex items-center justify-center">?</span>
            <div class="ml-[6px] w-[23px] h-[21px] bg-[#cce8ff] border border-[#99d1ff] flex items-center justify-center">
                <svg class="w-[14px] h-[13px]" viewBox="0 0 14 13"><rect x=".5" y=".5" width="13" height="12" fill="#fff" stroke="#777"/><path d="M.5 3.500h13M9 3.500v9" stroke="#777"/><path d="M3 6l3 2-3 2z" fill="#2da44e"/></svg>
            </div>
        </div>
        <div class="h-[7px] border-t border-[#dcdcdc] shrink-0"></div>

        <div class="h-[635px] flex shrink-0">
            <!-- tree -->
            <div class="w-[181px] bg-white border border-[#a0a0a0] pt-[1px] pl-[2px]">
                <div class="w-[135px] h-[20px] bg-[#cce8ff] flex items-center pl-[1px] pb-[2px]">
                    <svg class="w-[17px] h-[17px] mr-[5px]" viewBox="0 0 32 32"><use href="#clock"/></svg>任务计划程序 (本地)
                </div>
                <div class="h-[20px] flex items-center pl-[8px] pb-[2px]">
                    <svg class="w-[8px] h-[8px] mr-[5px]" viewBox="0 0 8 8"><path d="M2 1l3.500 3L2 7" fill="none" stroke="#a6a6a6" stroke-width="1.200"/></svg>
                    <svg class="w-[16px] h-[16px] mr-[5px]" viewBox="0 0 16 16"><path d="M1 2h5l1 2h6v10H1z" fill="#ffe486" stroke="#d8b040"/><circle cx="11" cy="11" r="4.500" fill="#eef3f8" stroke="#6d7f96"/></svg>任务计划程序库
                </div>
            </div>

            <!-- summary -->
            <div class="ml-[4px] w-[527px] flex flex-col border border-[#808080] border-b-[#a0a0a0]">
                <div class="h-[33px] bg-[#a0a0a0] text-[#efefef] pl-[3px] pt-[1px] shrink-0 tracking-[.15px]">任务计划程序摘要(上次刷新时间: 2020/9/30 14:36:35)</div>
                <div class="h-[536px] bg-white flex shrink-0 overflow-hidden">
                    <div class="w-[510px] pl-[10px] shrink-0">
                        <!-- overview -->
                        <div class="w-[489px] mt-[10px] h-[24px] flex items-end pb-[1px] pl-[6px] pr-[7px] justify-between border border-[#707070] bg-[linear-gradient(#f2f2f2,#dedede_35%,#a6a6a6)]">
                            <span>任务计划程序概述</span><svg class="w-[5px] h-[4px] mb-[6px]"><use href="#tri"/></svg>
                        </div>
                        <div class="w-[489px] h-[105px] bg-[#f0f0f0] flex overflow-hidden">
                            <svg class="w-[32px] h-[32px] ml-[10px] mt-[10px] shrink-0" viewBox="0 0 32 32"><use href="#clock"/></svg>
                            <p class="ml-[12px] mt-[10px] whitespace-nowrap">可以使用任务计划程序来创建和管理计算机将在所指定的时间自动执行的常<br>见任务。若要开始，请单击 “操作” 菜单中的命令。<br><br>任务存储在任务计划程序库的文件夹中。若要查看单独任务上的操作或执行<br>该操作，请在任务计划程序库中选择该任务，然后在 “操作” 菜单中单击命<br>令</p>
                            <div class="ml-auto w-[15px] shrink-0 flex flex-col items-center pt-[5px]">
                                <svg class="w-[8px] h-[8px]"><use href="#chev-u"/></svg>
                                <span class="w-[15px] h-[58px] mt-[4px] bg-[#cdcdcd]"></span>
                                <svg class="w-[8px] h-[8px] mt-[18px]"><use href="#chev-d"/></svg>
                            </div>
                        </div>
                        <!-- task status -->
                        <div class="w-[489px] mt-[10px] h-[24px] flex items-end pb-[1px] pl-[6px] pr-[7px] justify-between border border-[#707070] bg-[linear-gradient(#f2f2f2,#dedede_35%,#a6a6a6)]">
                            <span>任务状态</span><svg class="w-[5px] h-[4px] mb-[6px]"><use href="#tri"/></svg>
                        </div>
                        <div class="w-[489px] h-[282px] bg-[#f0f0f0] pl-[13px] pr-[3px] pt-[14px]">
                            <div class="flex justify-between pl-[3px]">
                                <span class="mt-[5px]">在以下时间段启动的任务状态:</span>
                                <div class="w-[144px] h-[23px] bg-[#e1e1e1] border border-[#adadad] flex items-center justify-between px-[3px]">
                                    <span class="[word-spacing:2px]">近 24 小时</span>
                                    <svg class="w-[9px] h-[9px] mr-[1px]" viewBox="0 0 8 8"><path d="M1 2l3 3 3-3" fill="none" stroke="#606060"/></svg>
                                </div>
                            </div>
                            <p class="mt-[16px] pl-[3px] [word-spacing:1.500px]"><b>摘要:</b> 总计 0 个 - 0 个正在运行，0 个成功，0 个停止，0 个失败</p>
                            <div class="mt-[45px] w-[473px] h-[150px] bg-white border border-[#a0a0a0] flex flex-col">
                                <div class="h-[25px] flex">
                                    <div class="w-[200px] pl-[7px] flex items-center">任务名</div>
                                    <div class="w-[75px] pl-[6px] flex items-center border-l border-[#e5e5e5]">运行结果</div>
                                    <div class="w-[100px] pl-[6px] flex items-center border-l border-[#e5e5e5]">运行开始时间</div>
                                    <div class="w-[96px] pl-[6px] flex items-center border-l border-[#e5e5e5]">运行结束时间</div>
                                </div>
                                <div class="mt-auto mb-[1px] mx-[2px] h-[15px] bg-[#f0f0f0] flex items-center">
                                    <span class="w-[16px] flex justify-center"><svg class="w-[8px] h-[8px]"><use href="#chev-l"/></svg></span>
                                    <span class="w-[355px] h-[15px] bg-[#cdcdcd]"></span>
                                    <span class="ml-auto w-[16px] flex justify-center"><svg class="w-[8px] h-[8px]"><use href="#chev-r"/></svg></span>
                                </div>
                            </div>
                        </div>
                        <!-- active tasks -->
                        <div class="w-[489px] mt-[10px] h-[24px] flex items-end pb-[1px] pl-[6px] pr-[7px] justify-between border border-[#707070] bg-[linear-gradient(#f2f2f2,#dedede_35%,#a6a6a6)]">
                            <span>活动任务</span><svg class="w-[5px] h-[4px] mb-[6px]"><use href="#tri"/></svg>
                        </div>
                        <div class="w-[489px] h-[46px] bg-[#f0f0f0] pl-[19px] pt-[22px]">活动任务是当前已在此计算机上启用且未过期的任务。</div>
                    </div>
                    <div class="w-[16px] ml-auto flex flex-col items-center pt-[5px]">
                        <svg class="w-[8px] h-[8px]"><use href="#chev-u"/></svg>
                        <span class="w-[16px] h-[340px] mt-[5px] bg-[#cdcdcd]"></span>
                        <svg class="w-[8px] h-[8px] mt-[164px]"><use href="#chev-d"/></svg>
                    </div>
                </div>
                <div class="h-[15px] bg-[#f0f0f0] flex items-center shrink-0 pl-[4px]">
                    <svg class="w-[8px] h-[8px] mr-[5px]"><use href="#chev-l"/></svg>
                    <span class="w-[460px] h-[15px] bg-[#cdcdcd]"></span>
                    <svg class="w-[8px] h-[8px] ml-[20px]"><use href="#chev-r"/></svg>
                </div>
                <div class="flex-1 bg-[#f0f0f0] flex items-center justify-between pl-[12px] pr-[9px]">
                    <span class="tracking-[.2px]">上次刷新时间: 2020/9/30 14:36:35</span>
                    <div class="w-[73px] h-[25px] bg-[#e1e1e1] border border-[#adadad] flex items-center justify-center">刷新</div>
                </div>
            </div>

            <!-- actions -->
            <div class="ml-[5px] w-[355px] bg-white border-l border-[#808080] border-t-2 border-t-[#707070] flex flex-col">
                <div class="h-[20px] bg-[#f0f0f0] border-b border-[#a0a0a0] pl-[6px] font-bold flex items-center shrink-0">操作</div>
                <div class="h-[26px] bg-[linear-gradient(#b9d1e8,#9dbbdb)] flex items-center justify-between pl-[7px] pr-[6px] pt-[1px] shrink-0">
                    <span>任务计划程序 (本地)</span><svg class="w-[9px] h-[5px] mr-[3px]"><use href="#tri"/></svg>
                </div>
                <div class="h-[24px] flex items-center pl-[32px] pb-[2px]">连接到另一台计算机...</div>
                <div class="h-[24px] flex items-center pl-[6px] pb-[2px]">
                    <svg class="w-[16px] h-[16px] mr-[10px]" viewBox="0 0 16 16"><rect x="1" y="2" width="14" height="13" fill="#e8eaec" stroke="#7a7f86"/><circle cx="9" cy="8" r="4" fill="#fff" stroke="#6d7f96"/><path d="M0 0h3v3H0z" fill="#f5c518"/></svg>创建基本任务...
                </div>
                <div class="h-[24px] flex items-center pl-[6px] pb-[2px]">
                    <svg class="w-[16px] h-[16px] mr-[10px]" viewBox="0 0 16 16"><circle cx="9" cy="10" r="4.500" fill="#f0f2f5" stroke="#8a97a4"/><path d="M3 2h5l1 4H4z" fill="#f5a818"/></svg>创建任务...
                </div>
                <div class="h-[24px] flex items-center pl-[32px] pb-[2px]">导入任务...</div>
                <div class="h-[24px] flex items-center pl-[6px] pb-[2px]">
                    <svg class="w-[16px] h-[16px] mr-[10px]" viewBox="0 0 16 16"><rect y="1" width="15" height="12" fill="#fff" stroke="#8a97a4"/><path d="M2 5h6M2 7h6M2 9h6" stroke="#b3bcc4"/><circle cx="11.500" cy="11.500" r="3.500" fill="#dceaf5" stroke="#6d7f96"/></svg>显示所有正在运行的任务
                </div>
                <div class="h-[24px] flex items-center pl-[6px] pb-[2px]">
                    <svg class="w-[16px] h-[16px] mr-[10px]" viewBox="0 0 16 16"><rect x="1" y="1" width="13" height="14" fill="#c8d8ee" stroke="#6d7f96"/><path d="M9 1l4 6H6z" fill="#f5c518"/><circle cx="6" cy="11" r="1.500" fill="#d02030"/></svg>启用所有任务历史记录
                </div>
                <div class="h-[25px] flex items-center ml-[6px] mr-[5px] border-t border-[#e5e5e5] pl-[26px] pb-[2px]">AT 服务帐户配置</div>
                <div class="h-[25px] flex items-center justify-between ml-[6px] mr-[5px] border-t border-[#e5e5e5] pl-[26px] pb-[2px]">
                    <span>查看</span>
                    <svg class="w-[5px] h-[9px] mr-[3px]" viewBox="0 0 5 9"><path d="M0 0l5 4.500L0 9z" fill="#111"/></svg>
                </div>
                <div class="h-[25px] flex items-center ml-[6px] mr-[5px] border-t border-[#e5e5e5] pb-[2px]">
                    <svg class="w-[14px] h-[16px] mr-[12px]" viewBox="0 0 14 16"><path d="M1 1h8l4 4v10H1z" fill="#f4f6f8" stroke="#9aa3aa"/><path d="M10 9a3.500 3.500 0 1 1-1-2.500" fill="none" stroke="#2aa84a" stroke-width="2"/></svg>刷新
                </div>
                <div class="h-[25px] flex items-center ml-[6px] mr-[5px] border-t border-[#e5e5e5] pb-[2px]">
                    <span class="w-[13px] h-[16px] mr-[13px] bg-[#2a46a8] text-white flex items-center justify-center">?</span>帮助
                </div>
            </div>
        </div>

        <div class="flex-1 border-t border-[#d0d0d0] flex shrink-0">
            <span class="ml-[852px] w-[134px] border-x border-[#d9d9d9]"></span>
        </div>
    </div>

    <!-- watermarks -->
    <div class="absolute left-[1488px] top-[987px] text-[46px] leading-[64px] tracking-[3px] whitespace-nowrap [text-shadow:2px_2px_0_#fff,-1px_-1px_0_#fff]">头条 @一涛说电脑</div>
    <div class="absolute left-[1722px] top-[1016px] text-[31px] leading-[40px] font-bold italic whitespace-nowrap">薛店亿众电脑</div>
    <div class="absolute left-[1735px] top-[1043px] text-[27px] leading-[32px] whitespace-nowrap font-['Liberation_Sans',sans-serif]">www.yzdn.net</div>

</body>
</html>
